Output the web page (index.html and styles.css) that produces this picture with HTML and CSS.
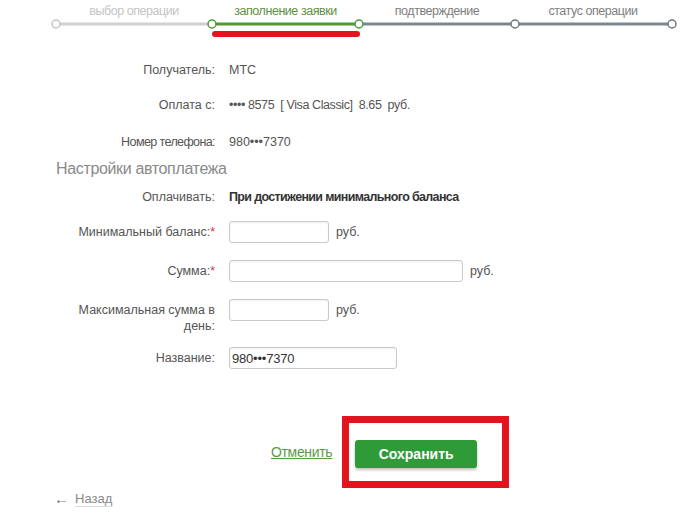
FILE: index.html
```html
<!DOCTYPE html>
<html lang="ru">
<head>
  <meta charset="UTF-8">
  <title>Автоплатеж</title>
  <link rel="stylesheet" href="styles.css">
</head>
<body>
  <div class="page">
    <!-- Шаги операции -->
    <div class="steps">
      <div class="step step-done">выбор операции</div>
      <div class="step step-active">заполнение заявки</div>
      <div class="step">подтверждение</div>
      <div class="step">статус операции</div>
    </div>
    <svg class="track" width="700" height="12" viewBox="0 0 700 12">
      <line x1="56" y1="6" x2="212" y2="6" stroke="#d0d0d0" stroke-width="3"/>
      <line x1="212" y1="6" x2="359" y2="6" stroke="#4e9a3a" stroke-width="3"/>
      <line x1="359" y1="6" x2="672" y2="6" stroke="#7c8790" stroke-width="3"/>
      <circle cx="56" cy="6" r="4" fill="#fff" stroke="#c4c4c4" stroke-width="1.5"/>
      <circle cx="212" cy="6" r="4" fill="#fff" stroke="#4e9a3a" stroke-width="1.5"/>
      <circle cx="359" cy="6" r="4" fill="#fff" stroke="#4e9a3a" stroke-width="1.5"/>
      <circle cx="515" cy="6" r="4" fill="#fff" stroke="#6d7880" stroke-width="1.5"/>
      <circle cx="672" cy="6" r="4" fill="#fff" stroke="#6d7880" stroke-width="1.5"/>
    </svg>
    <div class="mark-line"></div>

    <!-- Данные платежа -->
    <div class="form">
      <div class="row row-first">
        <div class="label">Получатель:</div>
        <div class="value">МТС</div>
      </div>
      <div class="row row-info">
        <div class="label">Оплата с:</div>
        <div class="value value-tight">•••• 8575&nbsp; [ Visa Classic]&nbsp; 8.65&nbsp; руб.</div>
      </div>
      <div class="row row-phone">
        <div class="label label-tight">Номер телефона:</div>
        <div class="value">980•••7370</div>
      </div>

      <h2 class="section-title">Настройки автоплатежа</h2>

      <div class="row row-pay">
        <div class="label">Оплачивать:</div>
        <div class="value value-bold">При достижении минимального баланса</div>
      </div>
      <div class="row row-min">
        <div class="label">Минимальный баланс:<span class="req">*</span></div>
        <div class="value"><input class="field field-short" type="text"> <span class="unit">руб.</span></div>
      </div>
      <div class="row row-sum">
        <div class="label">Сумма:<span class="req">*</span></div>
        <div class="value"><input class="field field-long" type="text"> <span class="unit">руб.</span></div>
      </div>
      <div class="row row-max">
        <div class="label label-wrap">Максимальная сумма в день:</div>
        <div class="value"><input class="field field-short" type="text"> <span class="unit">руб.</span></div>
      </div>
      <div class="row row-name">
        <div class="label">Название:</div>
        <div class="value"><input class="field field-mid" type="text" value="980•••7370"></div>
      </div>

      <div class="actions">
        <a href="javascript:void(0);" class="cancel">Отменить</a>
        <div class="mark-box">
          <button class="save" type="button">Сохранить</button>
        </div>
      </div>
    </div>

    <div class="back">
      <span class="arrow">&larr;</span>
      <a href="javascript:void(0);">Назад</a>
    </div>
  </div>
</body>
</html>
```

FILE: styles.css
```css
body {
  margin: 0;
  font-family: "Liberation Sans", Arial, sans-serif;
  background-color: #ffffff;
  color: #555555;
}
.page {
  width: 700px;
  height: 514px;
  overflow: hidden;
}
.steps {
  display: flex;
  margin-left: 56px;
  padding-top: 4px;
  height: 14px;
}
.step {
  text-align: center;
  font-size: 12.5px;
  letter-spacing: -0.45px;
  line-height: 15px;
  color: #7e7e7e;
  width: 156px;
}
.step-done {
  color: #c4c4c4;
}
.step-active {
  color: #5e8f45;
  width: 147px;
}
.track {
  display: block;
}
.mark-line {
  margin: 1px 0 0 212px;
  width: 148px;
  height: 6px;
  border-radius: 3px;
  background-color: #e4141e;
}
.form {
  padding-top: 22px;
}
.row {
  display: grid;
  grid-template-columns: 215px 1fr;
  column-gap: 14px;
  align-items: center;
  min-height: 22px;
  font-size: 12.5px;
}
.label {
  text-align: right;
  color: #555555;
}
.label-tight {
  letter-spacing: -0.6px;
}
.value {
  color: #555555;
  display: flex;
  align-items: center;
}
.value-tight {
  letter-spacing: -0.4px;
}
.value-bold {
  font-weight: bold;
  color: #333333;
  letter-spacing: -0.65px;
}
.row-info {
  margin-top: 13px;
}
.row-phone {
  margin-top: 15px;
}
.section-title {
  margin: 6px 0 0 56px;
  font-size: 16px;
  font-weight: normal;
  letter-spacing: -0.35px;
  line-height: 20px;
  color: #8a8a8a;
}
.row-pay {
  margin-top: 7px;
}
.row-min {
  margin-top: 13px;
}
.row-sum {
  margin-top: 17px;
}
.row-max {
  margin-top: 17px;
  align-items: start;
}
.label-wrap {
  line-height: 16px;
  padding-top: 3px;
  padding-left: 70px;
}
.row-name {
  margin-top: 13px;
}
.req {
  color: #e0303a;
}
.field {
  box-sizing: border-box;
  height: 22px;
  border: 1px solid #c9c9c9;
  border-radius: 3px;
  padding: 0 2px;
  font-family: inherit;
  font-size: 13px;
  letter-spacing: -0.2px;
  color: #333333;
  box-shadow: inset 0 1px 2px rgba(0, 0, 0, 0.06);
}
.field-short {
  width: 100px;
}
.field-long {
  width: 234px;
}
.field-mid {
  width: 168px;
}
.unit {
  margin-left: 7px;
}
.actions {
  display: flex;
  align-items: center;
  margin: 47px 0 0 271px;
}
.cancel {
  color: #5c9a47;
  font-size: 14px;
  letter-spacing: -0.35px;
  margin-right: 10px;
}
.mark-box {
  border: 7px solid #e4141e;
  padding: 17px 25px 13px 6px;
}
.save {
  width: 122px;
  height: 28px;
  border: none;
  border-radius: 3px;
  background-color: #2f9b38;
  color: #ffffff;
  font-family: inherit;
  font-size: 14px;
  font-weight: bold;
  box-shadow: 0 2px 3px rgba(0, 0, 0, 0.25);
}
.back {
  display: flex;
  align-items: center;
  margin: 2px 0 0 54px;
  font-size: 13px;
}
.arrow {
  color: #777777;
  font-size: 15px;
  margin-right: 6px;
}
.back a {
  color: #8a8a8a;
  text-decoration: none;
  border-bottom: 1px solid #dddddd;
}
```
